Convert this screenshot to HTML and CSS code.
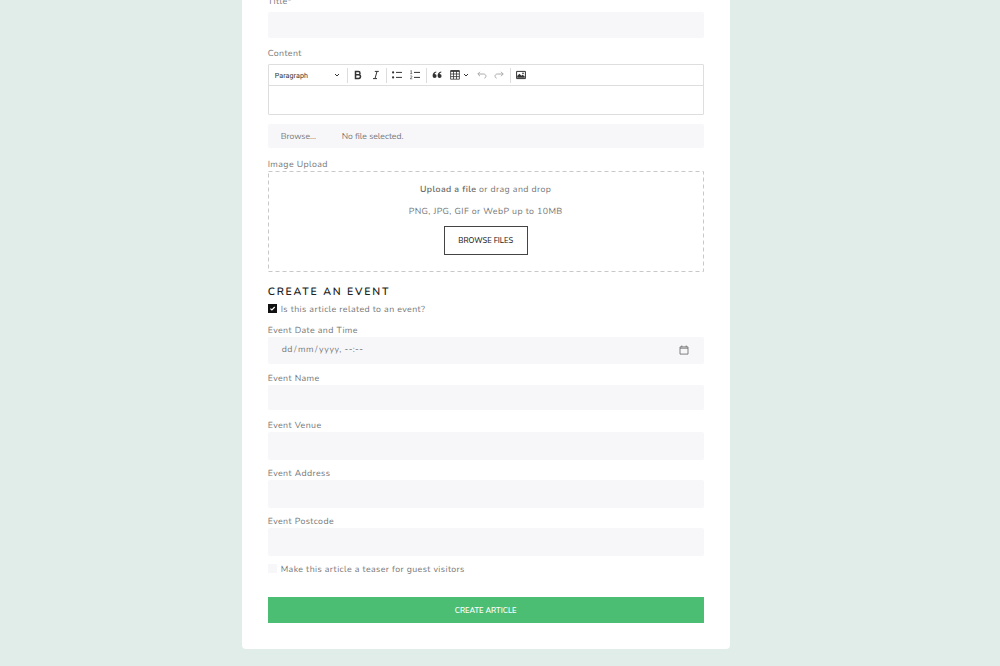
FILE: index.html
```html
<!DOCTYPE html>
<html lang="en">
<head>
<meta charset="utf-8">
<title>Create article</title>
<link rel="stylesheet" href="styles.css">
</head>
<body>
<form class="card">
  <label class="label label-title">Title*</label>
  <div class="field field-title"></div>
  <label class="label label-content">Content</label>
  <div class="editor">
    <div class="toolbar">
      <span class="paragraph">Paragraph</span>
      <svg class="chevron style-chevron" viewBox="0 0 6 6"><path d="M1 2l2 2 2-2"/></svg>
      <i class="sep"></i>
      <svg class="tool bold" viewBox="0 0 10 10"><path d="M2.5 1.6h2.9a1.6 1.6 0 0 1 0 3.2H2.5zM2.5 4.8h3.2a1.8 1.8 0 0 1 0 3.6H2.5z"/></svg>
      <svg class="tool italic" viewBox="0 0 10 10"><path d="M3.8 1.4h4M2 8.6h4M6 1.4l-2 7.2"/></svg>
      <i class="sep"></i>
      <svg class="tool list" viewBox="0 0 10 10"><path d="M4 2.4h6M4 7.4h6"/><circle cx="1.1" cy="2.4" r="1.1"/><circle cx="1.1" cy="7.4" r="1.1"/></svg>
      <svg class="tool numbers" viewBox="0 0 10 10"><path d="M4 2.4h6M4 7.4h6"/><path class="fine" d="M.4 1l.9-.5v3M.2 3.6h2M.3 6.2c.4-.8 1.8-.6 1.6.4L.3 8.8h2"/></svg>
      <i class="sep"></i>
      <svg class="tool quote" viewBox="0 0 10 10"><path d="M4.2 1.6C1.8 2 .6 3.5.6 6a2 2 0 1 0 2-2c.1-.8.7-1.3 1.7-1.5zM9.2 1.6C6.8 2 5.6 3.5 5.6 6a2 2 0 1 0 2-2c.1-.8.7-1.3 1.7-1.5z"/></svg>
      <svg class="tool table" viewBox="0 0 10 10"><path d="M.6.8h8.8v8.4H.6zM.6 4h8.8M.6 6.6h8.8M3.5 1v8M6.5 1v8"/><path class="head" d="M.6 1h8.8"/></svg>
      <svg class="chevron table-chevron" viewBox="0 0 6 6"><path d="M1 2l2 2 2-2"/></svg>
      <svg class="tool undo" viewBox="0 0 10 10"><path d="M3 1.8L.8 4 3 6.2M.9 4h5.6c3 0 3.2 3.6.9 4.2"/></svg>
      <svg class="tool redo" viewBox="0 0 10 10"><path d="M7 1.8L9.2 4 7 6.2M9.1 4H3.5C.5 4 .3 7.6 2.6 8.2"/></svg>
      <i class="sep"></i>
      <svg class="tool image" viewBox="0 0 10 10"><path class="frame" d="M.6 1.4h8.8v7.2H.6z"/><path d="M1.2 7.8V6.1l2.2-2.3 2 2 1.2-1 2.2 1.8v1.2z"/><circle cx="7" cy="3.4" r=".8"/></svg>
    </div>
  </div>
  <div class="file"><span class="file-button">Browse...</span><span class="file-name">No file selected.</span></div>
  <label class="label label-upload">Image Upload</label>
  <div class="dropzone">
    <svg class="dashes"><rect x=".5" y=".5" width="435" height="100"/></svg>
    <p class="drop-line drop-main"><b>Upload a file</b> or drag and drop</p>
    <p class="drop-line drop-hint">PNG, JPG, GIF or WebP up to 10MB</p>
    <button type="button" class="browse">BROWSE FILES</button>
  </div>
  <h2 class="heading">CREATE AN EVENT</h2>
  <div class="check-row check-event"><span class="box checked"><svg viewBox="0 0 9 9"><path d="M2.4 4.6l1.5 1.4 2.8-3"/></svg></span><span class="check-text">Is this article related to an event?</span></div>
  <div class="group"><label class="label date-label">Event Date and Time</label>
    <div class="field date"><span class="date-text">dd<i>/</i>mm<i>/</i>yyyy, --:--</span>
      <svg class="calendar" viewBox="0 0 10 10"><path d="M1 1.9h8v7.2H1zM1 3.2h8M2.8.5v1.6M7.2.5v1.6"/></svg></div></div>
  <div class="group"><label class="label name-label">Event Name</label><div class="field field-name"></div></div>
  <div class="group"><label class="label venue-label">Event Venue</label><div class="field"></div></div>
  <div class="group"><label class="label address-label">Event Address</label><div class="field"></div></div>
  <div class="group"><label class="label postcode-label">Event Postcode</label><div class="field"></div></div>
  <div class="check-row check-teaser"><span class="box"></span><span class="check-text teaser-text">Make this article a teaser for guest visitors</span></div>
  <button type="button" class="submit">CREATE ARTICLE</button>
</form>
</body>
</html>
```

FILE: styles.css
```css
* { box-sizing: border-box; }
body {
  margin: 0;
  height: 666px;
  overflow: hidden;
  background: #e1ede8;
  font-family: Nunito, "Open Sans", "Noto Sans", sans-serif;
  font-size: 8.8px;
  color: #777779;
  text-rendering: geometricPrecision;
}
.card {
  width: 488px;
  height: 655px;
  margin: -6px 0 0 241.7px;
  padding: 0 26px;
  background: #fefffe;
  border-radius: 4px;
  display: flow-root;
}
.label { display: block; height: 14px; line-height: 16px; letter-spacing: .4px; white-space: nowrap; }
.field { height: 28px; background: #f7f7f9; border-radius: 2px; }
.field-title { height: 26px; margin-top: 4px; }
.label-content { margin-top: 8px; }
.editor { height: 51px; margin-top: 4px; border: 1px solid #dedede; border-radius: 1px; }
.toolbar { height: 21px; display: flex; align-items: center; border-bottom: 1px solid #dedede; padding-left: 6px; }
.paragraph { width: 59.5px; flex: none; font: 7.1px Roboto, sans-serif; letter-spacing: .1px; color: #333; }
.toolbar svg { flex: none; fill: none; stroke: #333; stroke-width: 1; }
.chevron { width: 6px; height: 6px; }
.style-chevron { margin-right: 1px; }
.sep { width: 1px; height: 15px; background: #ddd; margin: 0 5px 0 5.5px; flex: none; }
.tool { width: 10px; height: 10px; }
.toolbar .bold { stroke-width: 1.5; }
.italic { margin: 0 -1px 0 8.5px; }
.toolbar .list circle { fill: #333; stroke: none; }
.numbers { margin-left: 8.5px; }
.numbers .fine { stroke-width: .6; }
.toolbar .quote { fill: #333; stroke: none; }
.table { margin-left: 8px; }
.toolbar .table { stroke-width: .8; }
.table .head { stroke-width: 1.6; }
.table-chevron { margin-left: 3.5px; }
.undo { margin-left: 7.5px; }
.redo { margin-left: 7.5px; }
.toolbar .undo, .toolbar .redo { stroke: #aaa; }
.toolbar .image { fill: #333; stroke: none; }
.image .frame { fill: none; stroke: #333; }
.file { height: 24px; margin-top: 9px; line-height: 26px; font-size: 8.6px; display: flex; background: #f7f7f9; border-radius: 2px; }
.file-button { width: 74px; padding-left: 13px; }
.label-upload { margin-top: 9px; }
.dropzone { position: relative; height: 101px; padding-top: 11px; display: flex; flex-direction: column; align-items: center; }
.dashes { position: absolute; inset: 0; width: 436px; height: 101px; fill: none; stroke: #c8c8c8; stroke-dasharray: 4 3; }
.drop-line { margin: 0 0 8px; height: 14px; line-height: 16px; letter-spacing: .4px; white-space: nowrap; }
.drop-line b { font-weight: 600; color: #666; }
.browse { width: 84px; height: 29px; padding: 0; background: #fff; border: 1px solid #222; outline: .5px solid #444; outline-offset: -1.5px; font: 500 7.6px Nunito, "Open Sans", sans-serif; color: #222; white-space: nowrap; }
.heading { margin: 12px 0 0; height: 16px; line-height: 15px; font-size: 10.6px; font-weight: 600; letter-spacing: 1.8px; color: #222; white-space: nowrap; }
.check-row { display: flex; align-items: center; height: 14px; gap: 4px; }
.check-event { margin-top: 1.5px; margin-bottom: 7.5px; }
.box { width: 9px; height: 9px; background: #f7f7f9; }
.box.checked { background: #111; }
.box svg { display: block; width: 9px; height: 9px; fill: none; stroke: #fff; stroke-width: 1.2; }
.check-text { height: 14px; line-height: 16px; letter-spacing: .4px; white-space: nowrap; }
.group { height: 47.7px; }
.date { display: flex; justify-content: space-between; height: 27px; padding: 0 15px 0 14px; }
.date-text { line-height: 27px; letter-spacing: .5px; }
.date-text i { font-style: normal; margin: 0 1px; }
.calendar { width: 10px; height: 10px; margin-top: 7.5px; fill: none; stroke: #666; stroke-width: .8; }
.field-name { height: 25px; }
.check-teaser { margin-top: .5px; }
.submit { display: block; width: 436px; height: 26px; margin-top: 21.5px; padding: 0; border: 0; background: #4cbe74; color: #fff; font: 600 7.6px Nunito, "Open Sans", sans-serif; }
```
